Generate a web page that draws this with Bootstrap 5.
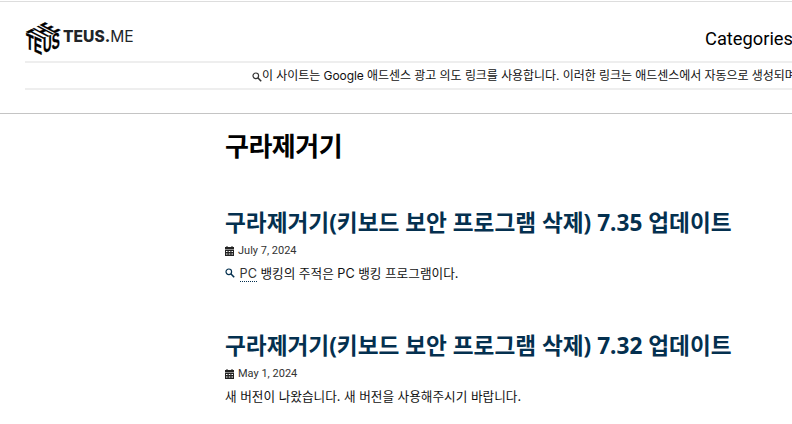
<!DOCTYPE html>
<html lang="ko">

<head>
    <meta charset="UTF-8">
    <meta name="viewport" content="width=device-width, initial-scale=1.0">
    <title>구라제거기</title>
    <link href="https://cdn.jsdelivr.net/npm/bootstrap@5.3.2/dist/css/bootstrap.min.css" rel="stylesheet">
    <style>
        body {
            font-family: Inter, "Noto Sans CJK KR", sans-serif;
            color: #111;
            overflow: hidden;
            height: 424px;
        }

        .site-head {
            border-top: 1px solid #ddd;
            margin-top: 1px;
            border-bottom: 1px solid #c4c4c4;
            height: 113px;
            padding-left: 25px;
        }

        .brand-row {
            height: 59px;
            padding-top: 12px;
        }

        .brand-name {
            font-family: Inter, sans-serif;
            font-size: 15.6px;
            line-height: 1;
            margin-left: 2px;
            margin-top: -2px;
        }

        .brand-name b {
            font-weight: 800;
        }

        .logo-box {
            overflow: visible;
        }

        .logo-box text {
            font-family: "Liberation Sans", sans-serif;
            font-weight: 700;
            font-size: 10px;
            fill: #000;
            stroke: #000;
            stroke-width: 0.2px;
        }

        .cat-link {
            font-family: Roboto, sans-serif;
            font-size: 18.3px;
            color: #000;
            text-decoration: none;
            white-space: nowrap;
            margin-top: 2px;
            margin-right: -1px;
        }

        .ad-strip {
            border-top: 2px solid #eee;
            border-bottom: 2px solid #eee;
            height: 29px;
            white-space: nowrap;
            overflow: hidden;
            font-size: 12px;
            letter-spacing: -0.06px;
            line-height: 25px;
            padding-left: 227px;
        }

        .page-body {
            padding-left: 225px;
        }

        .tag-title {
            font-size: 26px;
            font-weight: 700;
            letter-spacing: -0.5px;
            color: #000;
            margin: 17px 0 0;
            line-height: 32px;
        }

        .entry-title {
            font-family: "Noto Sans", "Noto Sans CJK KR", sans-serif;
            font-size: 22.65px;
            font-weight: 700;
            line-height: 28px;
            margin: 0;
            white-space: nowrap;
        }

        .entry-title a {
            color: #04304f;
            text-decoration: none;
        }

        .entry-date {
            font-family: Roboto, sans-serif;
            font-size: 11px;
            line-height: 14px;
            margin-top: 7px;
            color: #333;
        }

        .entry-text {
            font-size: 12.65px;
            line-height: 18px;
            margin-top: 7px;
        }

        .find-icon {
            margin-right: 1px;
        }

        .first-entry {
            margin-top: 46px;
        }

        .next-entry {
            margin-top: 49px;
        }

        .dotted-word {
            color: #333;
            border-bottom: 1px dotted #04304f;
        }
    </style>
</head>

<body>
    <!-- Header -->
    <header class="site-head">
        <div class="brand-row d-flex justify-content-between align-items-center">
            <a class="d-flex align-items-center text-decoration-none text-dark" href="#">
                <svg class="logo-box" width="36" height="36" viewBox="25 20 36 36">
                    <text transform="matrix(1 -0.5 2.2 1.15 41 40)">THE</text>
                    <text transform="matrix(1.25 0.55 0 2.2 26 48)">TE</text>
                    <text transform="matrix(1.2 -0.43 0 2.2 43 53)">US</text>
                </svg>
                <span class="brand-name"><b>TEUS.</b>ME</span>
            </a>
            <a class="cat-link" href="#">Categories</a>
        </div>
        <div class="ad-strip">
            <svg width="10" height="10" viewBox="0 0 10 10" fill="none" stroke="#333" stroke-width="1.2">
                <circle cx="3.8" cy="3.8" r="2.8"></circle>
                <path d="M5.8 5.8l3.4 3.4" stroke-width="1.6"></path>
            </svg>이 사이트는 Google 애드센스 광고 의도 링크를 사용합니다. 이러한 링크는 애드센스에서 자동으로 생성되며 수익을 창출합니다.
        </div>
    </header>

    <!-- Content -->
    <main class="page-body">
        <h1 class="tag-title">구라제거기</h1>

        <article class="first-entry">
            <h2 class="entry-title"><a href="#">구라제거기(키보드 보안 프로그램 삭제) 7.35 업데이트</a></h2>
            <div class="entry-date d-flex align-items-center gap-1">
                <svg width="9" height="10" viewBox="0 0 9 10" fill="#222">
                    <path d="M1.5 0h1v1h4V0h1v1H9v2H0V1h1.5zM0 3.6h9V10H0zM1 5v1h1.5V5zm2.7 0v1h1.6V5zm2.8 0v1H8V5zM1 7.4v1h1.5v-1zm2.7 0v1h1.6v-1zm2.8 0v1H8v-1z"></path>
                </svg>
                <span>July 7, 2024</span>
            </div>
            <p class="entry-text mb-0">
                <svg class="find-icon align-baseline" width="10" height="10" viewBox="0 0 10 10" fill="none" stroke="#04304f" stroke-width="1.2">
                    <circle cx="3.8" cy="3.8" r="2.8"></circle>
                    <path d="M5.8 5.8l3.4 3.4" stroke-width="1.6"></path>
                </svg>
                <span class="dotted-word">PC</span> 뱅킹의 주적은 PC 뱅킹 프로그램이다.
            </p>
        </article>

        <article class="next-entry">
            <h2 class="entry-title"><a href="#">구라제거기(키보드 보안 프로그램 삭제) 7.32 업데이트</a></h2>
            <div class="entry-date d-flex align-items-center gap-1">
                <svg width="9" height="10" viewBox="0 0 9 10" fill="#222">
                    <path d="M1.5 0h1v1h4V0h1v1H9v2H0V1h1.5zM0 3.6h9V10H0zM1 5v1h1.5V5zm2.7 0v1h1.6V5zm2.8 0v1H8V5zM1 7.4v1h1.5v-1zm2.7 0v1h1.6v-1zm2.8 0v1H8v-1z"></path>
                </svg>
                <span>May 1, 2024</span>
            </div>
            <p class="entry-text mb-0">새 버전이 나왔습니다. 새 버전을 사용해주시기 바랍니다.</p>
        </article>
    </main>

    <script src="https://cdn.jsdelivr.net/npm/bootstrap@5.3.2/dist/js/bootstrap.bundle.min.js"></script>
</body>

</html>
